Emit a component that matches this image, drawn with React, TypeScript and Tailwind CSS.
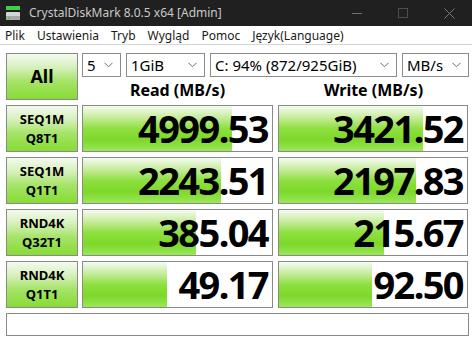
import React from "react";

const font = { fontFamily: '"Noto Sans", "Open Sans", sans-serif' };

const Chevron = () => (
  <svg width="9" height="6" viewBox="0 0 9 6" className="shrink-0">
    <path d="M0.5 0.8 L4.5 4.8 L8.5 0.8" fill="none" stroke="#6b6b6b" strokeWidth="1" />
  </svg>
);

const Select = ({ value, w }: { value: string; w: string }) => (
  <div className={`${w} h-[24px] flex items-center justify-between border border-[#8c8c8c] bg-white pl-[4px] pr-[7px] text-[15px] text-black`}>
    <span className="leading-[22px]">{value}</span>
    <Chevron />
  </div>
);

const rows = [
  { l1: "SEQ1M", l2: "Q8T1", read: "4999.53", rw: 149, write: "3421.52", ww: 144 },
  { l1: "SEQ1M", l2: "Q1T1", read: "2243.51", rw: 138, write: "2197.83", ww: 137 },
  { l1: "RND4K", l2: "Q32T1", read: "385.04", rw: 113, write: "215.67", ww: 105 },
  { l1: "RND4K", l2: "Q1T1", read: "49.17", rw: 84, write: "92.50", ww: 93 },
];

const greenBtn = "bg-[linear-gradient(to_bottom,#f4faee_0%,#d6f0bc_30%,#a6e468_60%,#86dc34_100%)]";
const barFill = "bg-[linear-gradient(to_bottom,#f6fbf2_0%,#c8ec9e_25%,#8ee040_50%,#7ed82a_75%,#9ae858_100%)]";

const Value = ({ text, fill }: { text: string; fill: number }) => (
  <div className="relative h-[47px] border border-[#8a8a8a] bg-white">
    <div className={`absolute left-0 top-0 bottom-0 ${barFill}`} style={{ width: fill }} />
    <div
      className="relative h-full flex items-center justify-end pr-[4px] text-[38px] font-bold text-black tracking-[-1.6px] leading-[45px]"
      style={font}
    >
      {text}
    </div>
  </div>
);

export default function App() {
  return (
    <div className="w-[472px] h-[346px] bg-white overflow-hidden" style={font}>
      {/* title bar */}
      <div className="h-[26px] bg-[#202020] flex items-center">
        <svg width="16" height="16" viewBox="0 0 16 16" className="ml-[5px]">
          <rect x="1" y="1" width="14" height="4" fill="#3fd04a" />
          <rect x="1" y="6" width="14" height="1" fill="#1a1a1a" />
          <rect x="1" y="7" width="14" height="8" rx="1" fill="#d4d4d4" />
          <rect x="1" y="11" width="14" height="4" fill="#a8a8a8" />
          <rect x="3" y="12" width="2" height="2" fill="#3fd04a" />
        </svg>
        <span className="ml-[8px] text-[12px] text-[#c9c9c9]">CrystalDiskMark 8.0.5 x64 [Admin]</span>
        <div className="ml-auto flex items-center h-full">
          <div className="w-[46px] flex justify-center">
            <div className="w-[10px] h-px bg-[#6f6f6f]" />
          </div>
          <div className="w-[46px] flex justify-center">
            <div className="w-[10px] h-[10px] border border-[#4e4e4e]" />
          </div>
          <div className="w-[46px] flex justify-center">
            <svg width="11" height="11" viewBox="0 0 11 11">
              <path d="M0.5 0.5 L10.5 10.5 M10.5 0.5 L0.5 10.5" stroke="#7a7a7a" strokeWidth="1" />
            </svg>
          </div>
        </div>
      </div>

      {/* menu */}
      <div className="h-[19px] flex items-center gap-[12px] pl-[5px] pt-[2px] text-[12px] text-[#1a1a1a] border-b border-[#d6d6d6]">
        <span>Plik</span>
        <span>Ustawienia</span>
        <span>Tryb</span>
        <span>Wygląd</span>
        <span>Pomoc</span>
        <span>Język(Language)</span>
      </div>

      <div className="pl-[6px] pt-[8px]">
        {/* top row */}
        <div className="flex gap-[4px]">
          <div
            className={`w-[72px] h-[47px] border border-[#8a8a8a] ${greenBtn} flex items-center justify-center text-[18px] font-bold text-black`}
          >
            All
          </div>
          <div className="w-[387px] flex flex-col">
            <div className="flex gap-[5px]">
              <Select value="5" w="w-[39px]" />
              <Select value="1GiB" w="w-[79px]" />
              <Select value="C: 94% (872/925GiB)" w="w-[187px]" />
              <Select value="MB/s" w="w-[67px]" />
            </div>
            <div className="flex gap-[5px] mt-[3px] text-[16px] font-bold text-black leading-[20px]">
              <div className="w-[191px] text-center">Read (MB/s)</div>
              <div className="w-[191px] text-center">Write (MB/s)</div>
            </div>
          </div>
        </div>

        {/* result rows */}
        <div className="mt-[5px] flex flex-col gap-[5px]">
          {rows.map((r, i) => (
            <div key={i} className="grid grid-cols-[72px_191px_191px] gap-x-[4px]">
              <div
                className={`h-[47px] border border-[#8a8a8a] ${greenBtn} flex flex-col items-center justify-center text-[13px] font-bold text-black leading-[19px]`}
              >
                <span>{r.l1}</span>
                <span>{r.l2}</span>
              </div>
              <Value text={r.read} fill={r.rw} />
              <div className="ml-[1px]">
                <Value text={r.write} fill={r.ww} />
              </div>
            </div>
          ))}
        </div>

        {/* comment */}
        <div className="mt-[5px] w-[463px] h-[23px] border border-[#8a8a8a] bg-white" />
      </div>
    </div>
  );
}
